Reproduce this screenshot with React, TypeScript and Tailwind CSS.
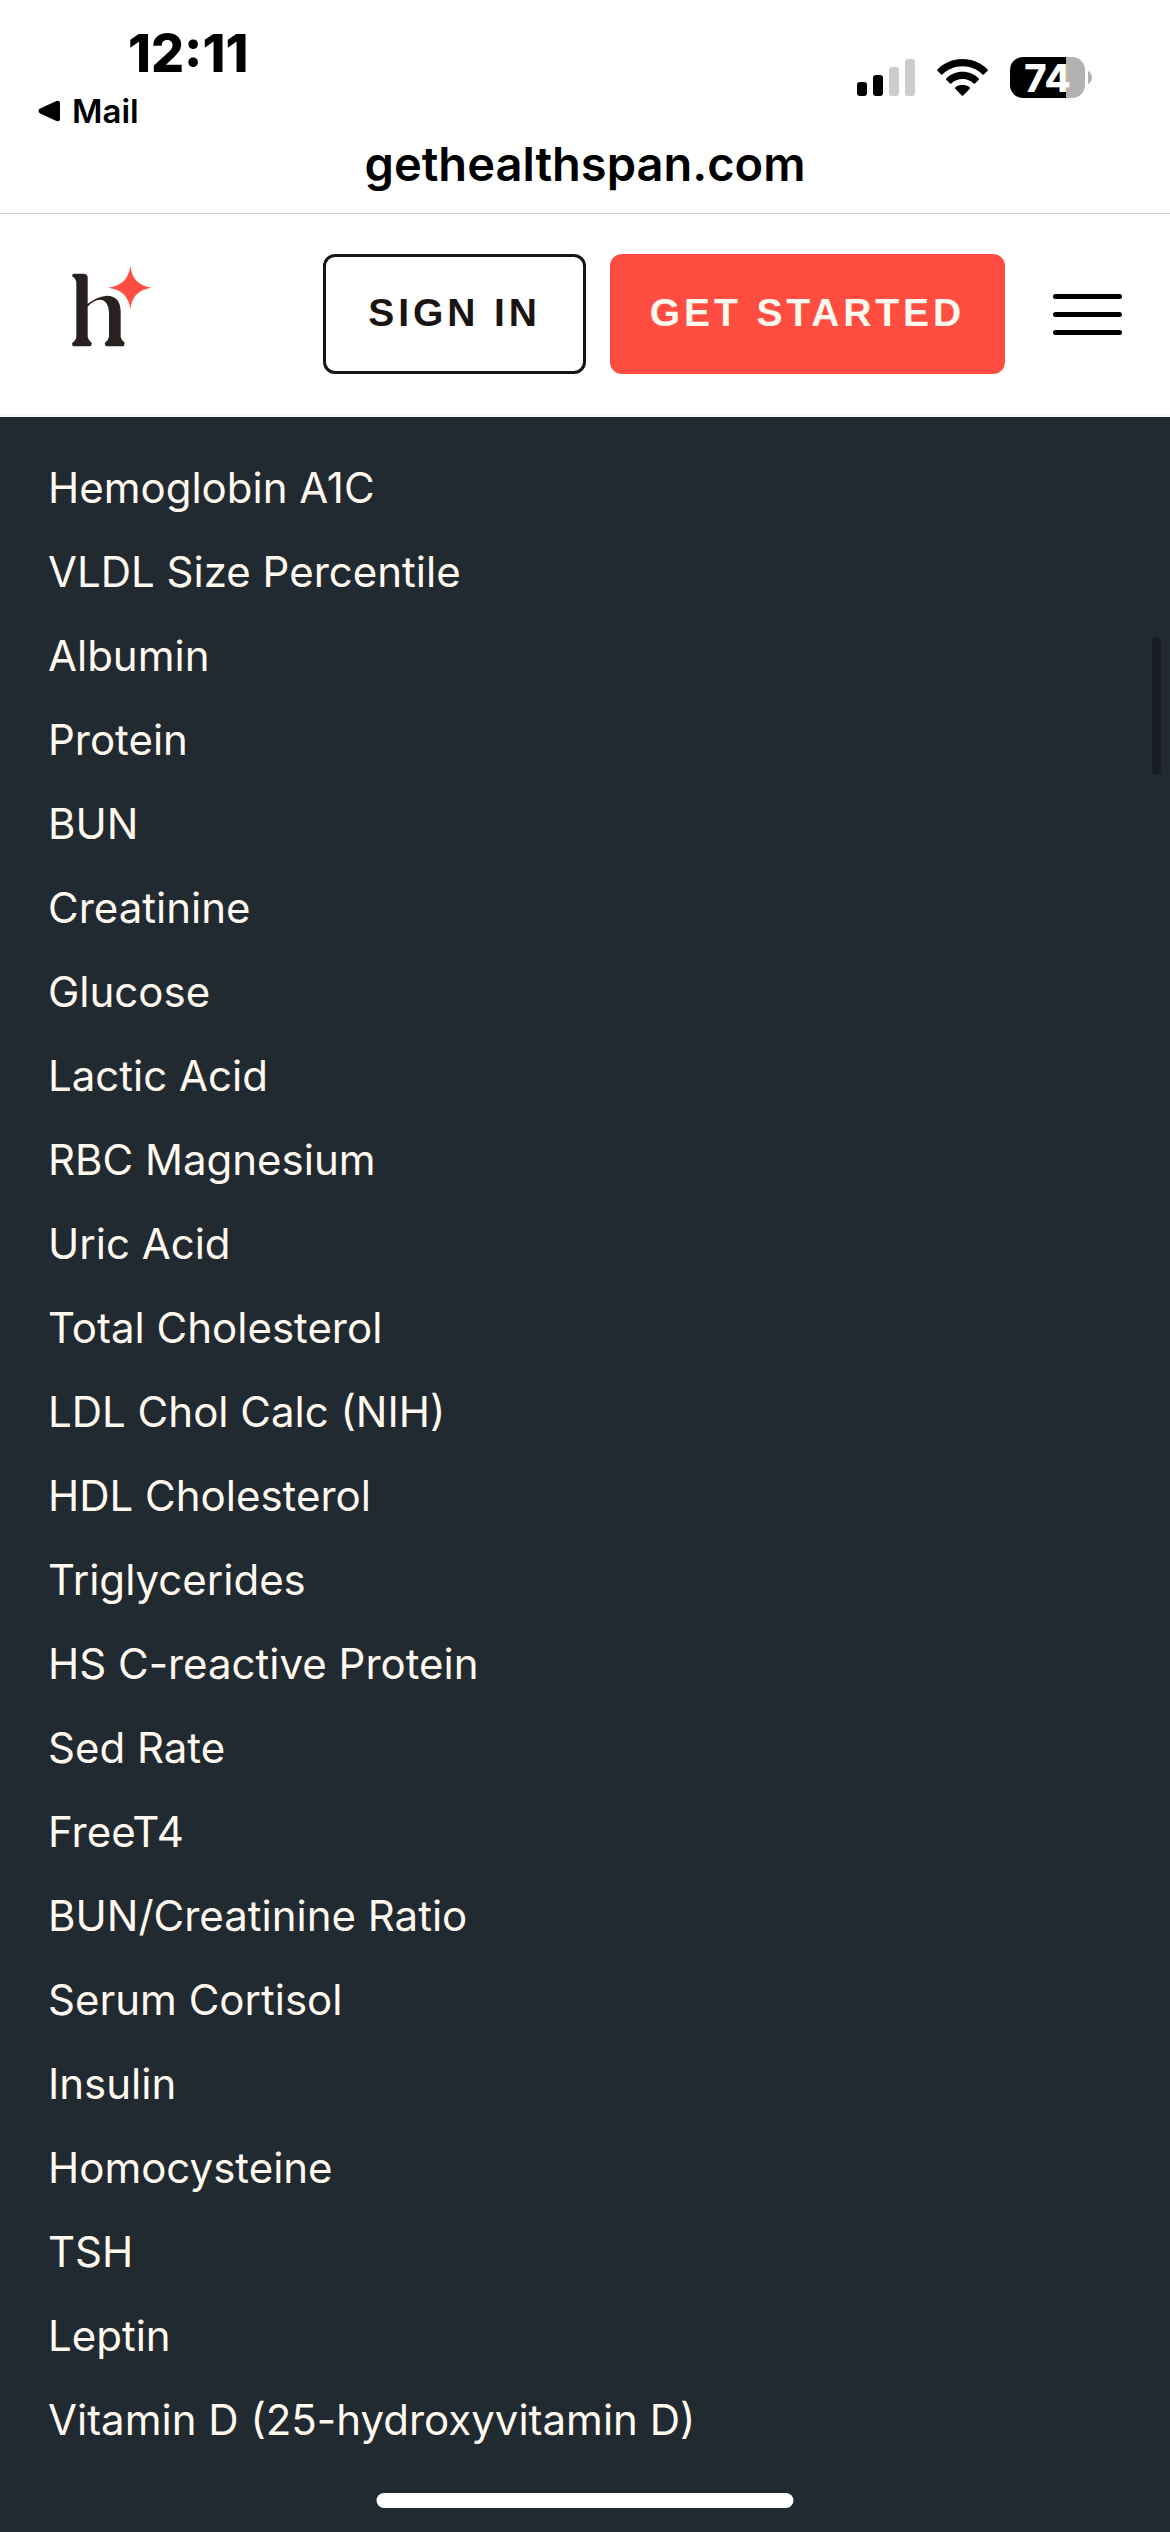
const biomarkers = [
  'Hemoglobin A1C',
  'VLDL Size Percentile',
  'Albumin',
  'Protein',
  'BUN',
  'Creatinine',
  'Glucose',
  'Lactic Acid',
  'RBC Magnesium',
  'Uric Acid',
  'Total Cholesterol',
  'LDL Chol Calc (NIH)',
  'HDL Cholesterol',
  'Triglycerides',
  'HS C-reactive Protein',
  'Sed Rate',
  'FreeT4',
  'BUN/Creatinine Ratio',
  'Serum Cortisol',
  'Insulin',
  'Homocysteine',
  'TSH',
  'Leptin',
  'Vitamin D (25-hydroxyvitamin D)',
];

function SignalIcon() {
  return (
    <svg width="58" height="37" viewBox="0 0 58 37" role="img" aria-label="Signal, 2 of 4 bars">
      <rect x="0" y="23" width="10" height="14" rx="3" fill="#000" />
      <rect x="16" y="16" width="10" height="21" rx="3" fill="#000" />
      <rect x="32" y="8" width="10" height="29" rx="3" fill="#ccc" />
      <rect x="48" y="0" width="10" height="37" rx="3" fill="#ccc" />
    </svg>
  );
}

function WifiIcon() {
  return (
    <svg width="51" height="37" viewBox="0 0 51 37" role="img" aria-label="Wi-Fi">
      <path d="M0.4 10.4C7 3.8 15.800 0 25.500 0S44 3.800 50.600 10.400C51 10.800 51 11.300 50.600 11.700L46.800 15.400C46.400 15.800 45.900 15.800 45.500 15.400C40.300 10.300 33.200 7.300 25.500 7.300S10.700 10.300 5.500 15.400C5.100 15.800 4.600 15.800 4.200 15.400L0.400 11.700C0 11.300 0 10.800 0.400 10.400Z" />
      <path d="M9.200 19.400C13.500 15.300 19.200 12.800 25.500 12.800S37.500 15.300 41.800 19.400C42.200 19.800 42.200 20.300 41.800 20.700L38 24.400C37.600 24.800 37.100 24.800 36.700 24.400C33.700 21.700 29.800 20.100 25.500 20.100S17.300 21.700 14.300 24.400C13.900 24.800 13.400 24.800 13 24.400L9.200 20.700C8.800 20.300 8.800 19.800 9.200 19.400Z" />
      <path d="M18.200 28.400C20.200 26.700 22.700 25.700 25.500 25.700S30.800 26.700 32.800 28.400C33.200 28.800 33.200 29.300 32.800 29.700L26.200 36.500C25.800 36.900 25.200 36.900 24.800 36.500L18.200 29.700C17.800 29.300 17.800 28.800 18.200 28.400Z" />
    </svg>
  );
}

function Battery() {
  return (
    <div className="flex items-center gap-[3px]">
      <div className="flex h-[41px] w-[75px] items-center justify-center rounded-[13px] bg-linear-to-r from-black from-75% to-[#b2b2b2] to-75% text-[38px] leading-none font-extrabold text-white">
        74
      </div>
      <svg width="4" height="13" viewBox="0 0 4 13" fill="#b2b2b2" aria-hidden="true">
        <path d="M0 0C2.500 1 4 3.500 4 6.500S2.500 12 0 13Z" />
      </svg>
    </div>
  );
}

function StatusBar() {
  return (
    <div className="border-b border-[#c8c8c8] bg-white pb-6 font-[Inter,sans-serif] text-black">
      <div className="flex items-start justify-between pr-[78px] pl-[38px]">
        <div className="pt-6">
          <div className="pl-[90px] text-[52px] leading-[60px] font-extrabold">12:11</div>
          <a href="#mail" className="flex items-center gap-3 text-[33px] leading-[54px] font-semibold">
            <svg width="22" height="22" viewBox="0 0 22 22" aria-hidden="true">
              <path d="M2 8.600L18.500 1C20.500 0.200 22 1.200 22 3V19C22 20.800 20.500 21.800 18.500 21L2 13.400C0 12.400 0 9.600 2 8.600Z" />
            </svg>
            Mail
          </a>
        </div>
        <div className="flex items-center gap-[22px] pt-[57px]">
          <SignalIcon />
          <WifiIcon />
          <Battery />
        </div>
      </div>
      <div className="text-center text-[47px] leading-[51px] font-semibold">gethealthspan.com</div>
    </div>
  );
}

function Logo() {
  return (
    <a href="#home" aria-label="Healthspan home" className="block pb-4">
      <svg width="80" height="81" viewBox="0 0 240 243" aria-hidden="true">
        <path
          fill="#29211f"
          d="M1 27Q1 23 8 23H34Q47 23 47 34V113Q78 90 105 89Q146 90 146 138V212Q148 222 157 229Q159 234 155 241H102Q97 236 99 230Q109 224 111 212V144Q110 102 84 101Q65 101 47 122V212Q49 223 59 230Q60 236 56 241H3Q-1 237 1 230Q12 223 13 212V52Q12 38 4 34Q0 32 1 27Z"
        />
        <path
          fill="#ff4d42"
          d="M175 0Q181 57 238 65Q181 73 175 130Q169 73 109 65Q169 57 175 0Z"
        />
      </svg>
    </a>
  );
}

function SiteHeader() {
  return (
    <header className="flex items-center justify-between border-b-[3px] border-[#fafafa] bg-white py-10 pr-12 pl-[72px]">
      <Logo />
      <nav className="flex items-center gap-6 font-['Liberation_Sans',Arial,sans-serif] text-[39px] leading-none font-bold tracking-widest">
        <button
          type="button"
          className="h-[120px] rounded-xl border-[3px] border-[#1a1412] px-[42px] pb-1 text-[#1a1412]"
        >
          SIGN IN
        </button>
        <button type="button" className="h-[120px] rounded-xl bg-[#ff4d42] px-10 pb-1 text-[#fff9f0]">
          GET STARTED
        </button>
        <button type="button" aria-label="Open menu" className="ml-6 flex w-[69px] flex-col gap-[13px]">
          <span className="h-[5px] w-full rounded-full bg-black" />
          <span className="h-[5px] w-full rounded-full bg-black" />
          <span className="h-[5px] w-full rounded-full bg-black" />
        </button>
      </nav>
    </header>
  );
}

export default function App() {
  return (
    <div className="relative flex min-h-screen flex-col bg-[#222a31]">
      <StatusBar />
      <SiteHeader />
      <main className="flex-1 px-12 pt-[29px] pb-16">
        <ul className="font-[Inter,sans-serif] text-[42px] leading-[84px] text-[#fff9f0]">
          {biomarkers.map((name) => (
            <li key={name}>{name}</li>
          ))}
        </ul>
      </main>
      <div className="absolute top-[637px] right-[9px] h-[138px] w-[9px] rounded-full bg-[#171c25]" />
      <div className="absolute bottom-6 left-1/2 h-[15px] w-[417px] -translate-x-1/2 rounded-full bg-white" />
    </div>
  );
}
